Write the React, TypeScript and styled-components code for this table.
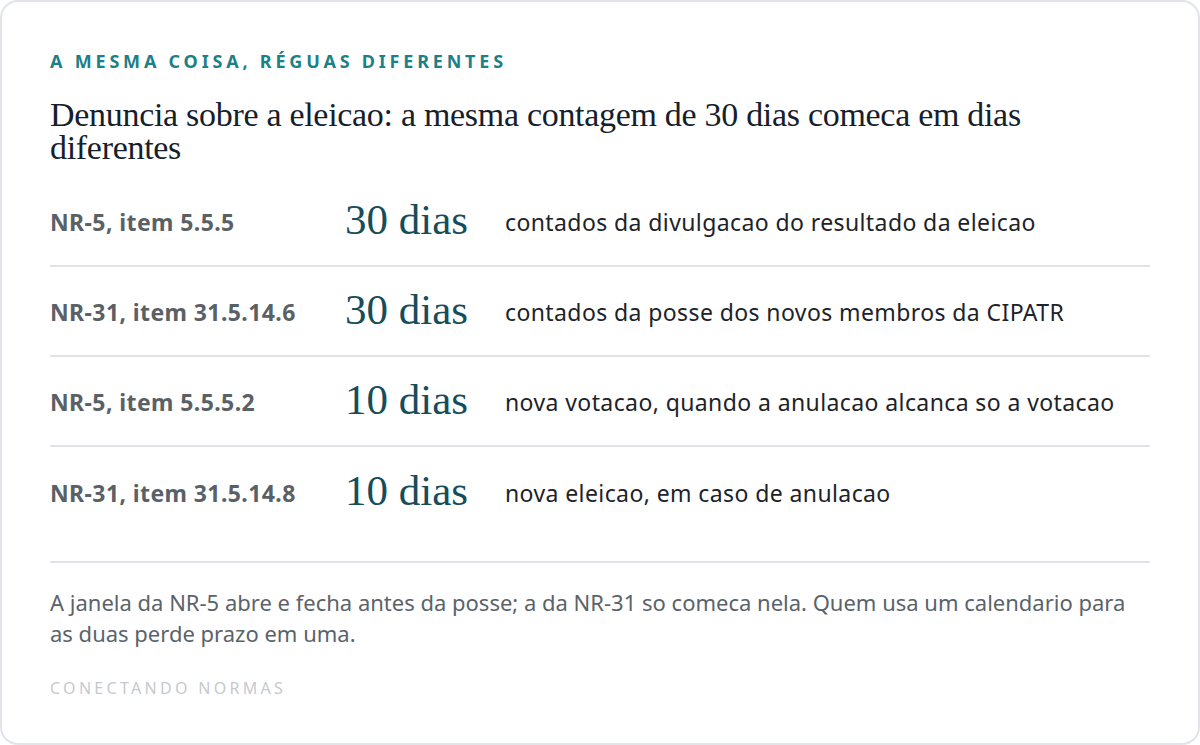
import React from 'react'
import styled, { createGlobalStyle } from 'styled-components'

const GlobalStyle = createGlobalStyle`
  html, body {
    margin: 0;
    padding: 0;
    background: #ffffff;
  }
  * {
    box-sizing: border-box;
  }
`

const Card = styled.div`
  width: 1200px;
  height: 745px;
  border: 2px solid #e1e5e9;
  border-radius: 18px;
  background: #ffffff;
  padding: 48px 48px 0 48px;
  font-family: 'Noto Sans', sans-serif;
`

const Eyebrow = styled.div`
  font-size: 18px;
  font-weight: 700;
  letter-spacing: 3.8px;
  color: #1d7f87;
  text-transform: uppercase;
  line-height: 22px;
`

const Heading = styled.h1`
  margin: 26px 0 0 0;
  max-width: 1060px;
  font-family: 'Liberation Serif', 'Times New Roman', serif;
  font-weight: 400;
  font-size: 34px;
  line-height: 33px;
  color: #15202b;
  letter-spacing: -0.3px;
`

const Rows = styled.div`
  margin-top: 13px;
  display: flex;
  flex-direction: column;
`

const Row = styled.div<{ last?: boolean }>`
  display: grid;
  grid-template-columns: 295px 160px 1fr;
  align-items: center;
  height: 90px;
  border-bottom: ${({ last }) => (last ? 'none' : '2px solid #dfe3e7')};
`

const Ref = styled.div`
  font-size: 23px;
  font-weight: 700;
  letter-spacing: 0.4px;
  color: #5a6166;
  padding-top: 1px;
`

const Days = styled.div`
  font-family: 'Liberation Serif', 'Times New Roman', serif;
  font-size: 43px;
  color: #164d5b;
  line-height: 1;
  margin-top: -4px;
`

const Desc = styled.div`
  font-size: 23px;
  letter-spacing: 0.4px;
  color: #1d2328;
  padding-top: 1px;
`

const Footer = styled.div`
  margin-top: 24px;
  border-top: 2px solid #dfe3e7;
  padding-top: 24px;
`

const Note = styled.p`
  margin: 0;
  max-width: 1095px;
  font-size: 22px;
  line-height: 31px;
  color: #5b636a;
`

const Brand = styled.div`
  margin-top: 29px;
  font-size: 16px;
  line-height: 20px;
  letter-spacing: 3.3px;
  color: #c4cace;
  text-transform: uppercase;
`

const ROWS = [
  { ref: 'NR-5, item 5.5.5', days: '30 dias', desc: 'contados da divulgacao do resultado da eleicao' },
  { ref: 'NR-31, item 31.5.14.6', days: '30 dias', desc: 'contados da posse dos novos membros da CIPATR' },
  { ref: 'NR-5, item 5.5.5.2', days: '10 dias', desc: 'nova votacao, quando a anulacao alcanca so a votacao' },
  { ref: 'NR-31, item 31.5.14.8', days: '10 dias', desc: 'nova eleicao, em caso de anulacao' }
]

export default function App() {
  return (
    <>
      <GlobalStyle />
      <Card>
        <Eyebrow>A mesma coisa, réguas diferentes</Eyebrow>
        <Heading>Denuncia sobre a eleicao: a mesma contagem de 30 dias comeca em dias diferentes</Heading>
        <Rows>
          {ROWS.map((r, i) => (
            <Row key={r.ref} last={i === ROWS.length - 1}>
              <Ref>{r.ref}</Ref>
              <Days>{r.days}</Days>
              <Desc>{r.desc}</Desc>
            </Row>
          ))}
        </Rows>
        <Footer>
          <Note>
            A janela da NR-5 abre e fecha antes da posse; a da NR-31 so comeca nela. Quem usa um calendario para
            as duas perde prazo em uma.
          </Note>
          <Brand>Conectando normas</Brand>
        </Footer>
      </Card>
    </>
  )
}
